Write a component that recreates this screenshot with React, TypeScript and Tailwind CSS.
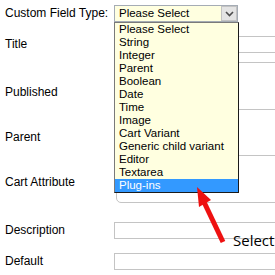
import React from "react";

const items = [
  "Please Select",
  "String",
  "Integer",
  "Parent",
  "Boolean",
  "Date",
  "Time",
  "Image",
  "Cart Variant",
  "Generic child variant",
  "Editor",
  "Textarea",
  "Plug-ins",
];

export default function App() {
  return (
    <div
      className="relative w-[275px] h-[275px] overflow-hidden bg-white text-black"
      style={{ fontFamily: '"Liberation Sans", Arial, sans-serif' }}
    >
      <div className="pt-[5px] text-[12px]">
        {/* Custom field type */}
        <div className="flex h-[17px] items-center">
          <div className="w-[114px] shrink-0 pl-[5px] leading-[15px]">Custom Field Type:</div>
          <div className="relative flex h-[17px] w-[124px] shrink-0 items-center border border-[#a5acb5] bg-[#ffffe0]">
            <span className="pl-[4px] text-[11.5px] leading-[13px]">Please Select</span>
            <div className="absolute right-0 top-0 flex h-[15px] w-[16px] items-center justify-center border border-[#c3c3c3] bg-[#e4e4e4]">
              <svg width="9" height="6" viewBox="0 0 9 6">
                <path d="M1 1 L4.5 4.5 L8 1" fill="none" stroke="#4d4d4d" strokeWidth="1.6" />
              </svg>
            </div>
          </div>
        </div>

        {/* Title */}
        <div className="mt-[14px] flex h-[17px] items-center">
          <div className="w-[114px] shrink-0 pl-[5px] leading-[15px]">Title</div>
          <div className="h-[17px] w-[200px] shrink-0 border border-[#c4c4c4]" />
        </div>

        {/* Box group */}
        <div className="mt-[9px] flex">
          <div className="w-[116px] shrink-0">
            <div className="h-[47px] pl-[5px] pt-[23px] leading-[15px]">Published</div>
            <div className="h-[46px] pl-[5px] pt-[21px] leading-[15px]">Parent</div>
            <div className="h-[48px] pl-[5px] pt-[20px] leading-[15px]">Cart Attribute</div>
          </div>
          <div className="w-[200px] shrink-0 rounded-bl-[5px] border border-[#c4c4c4]">
            <div className="h-[46px]" />
            <div className="h-[46px] border-t border-[#c4c4c4]" />
            <div className="h-[47px] border-t border-[#c4c4c4]" />
          </div>
        </div>

        {/* Description */}
        <div className="mt-[19px] flex h-[17px] items-center">
          <div className="w-[114px] shrink-0 pl-[5px] leading-[15px]">Description</div>
          <div className="h-[17px] w-[200px] shrink-0 border border-[#c4c4c4]" />
        </div>

        {/* Default */}
        <div className="mt-[14px] flex h-[17px] items-center">
          <div className="w-[114px] shrink-0 pl-[5px] leading-[15px]">Default</div>
          <div className="h-[17px] w-[200px] shrink-0 border border-[#c4c4c4]" />
        </div>
      </div>

      {/* Dropdown list */}
      <div className="absolute left-[114px] top-[22px] w-[125px] border border-[#1a1a1a] border-l-[#7a7a7a] border-t-[#7a7a7a] bg-[#ffffe0]">
        {items.map((it) => (
          <div
            key={it}
            className={
              it === "Plug-ins"
                ? "h-[13px] bg-[#3399ff] pl-[4px] text-[11.5px] leading-[13px] text-white"
                : "h-[13px] pl-[4px] text-[11.5px] leading-[13px]"
            }
          >
            {it}
          </div>
        ))}
      </div>

      {/* Red arrow */}
      <svg className="absolute left-0 top-0" width="275" height="275" viewBox="0 0 275 275">
        <line x1="223" y1="242" x2="204" y2="202" stroke="#ee1111" strokeWidth="5" />
        <polygon points="197,187 211,200 199,207" fill="#ee1111" />
      </svg>

      <div
        className="absolute left-[233px] top-[230px] text-[15px] leading-[20px]"
        style={{ fontFamily: '"Open Sans", "Liberation Sans", sans-serif' }}
      >
        Select
      </div>
    </div>
  );
}
